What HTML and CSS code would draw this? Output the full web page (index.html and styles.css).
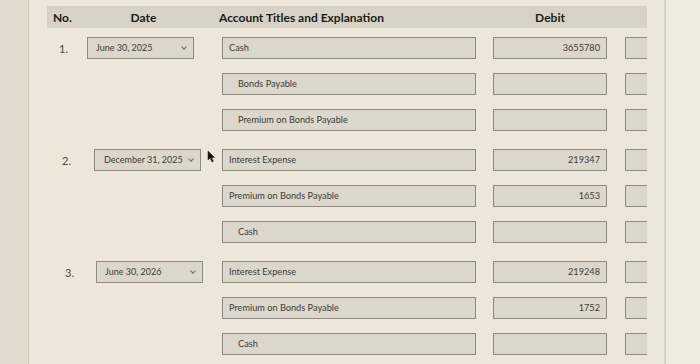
FILE: index.html
```html
<!DOCTYPE html>
<html>
<head>
<meta charset="utf-8">
<link rel="stylesheet" href="styles.css">
</head>
<body>
<div class="screen">
  <div class="left-strip"></div>
  <div class="panel">
    <div class="sheet">
      <div class="head row">
        <div class="c-no">No.</div>
        <div class="c-date center">Date</div>
        <div class="c-acct acct-head">Account Titles and Explanation</div>
        <div class="c-debit center">Debit</div>
        <div class="c-credit"></div>
      </div>

      <div class="row entry first">
        <div class="c-no num">1.</div>
        <div class="c-date"><div class="select">June 30, 2025<span class="chev"></span></div></div>
        <div class="c-acct"><div class="box">Cash</div></div>
        <div class="c-debit"><div class="box amt">3655780</div></div>
        <div class="c-credit"><div class="box"></div></div>
      </div>
      <div class="row">
        <div class="c-no"></div>
        <div class="c-date"></div>
        <div class="c-acct"><div class="box indent">Bonds Payable</div></div>
        <div class="c-debit"><div class="box"></div></div>
        <div class="c-credit"><div class="box"></div></div>
      </div>
      <div class="row">
        <div class="c-no"></div>
        <div class="c-date"></div>
        <div class="c-acct"><div class="box indent">Premium on Bonds Payable</div></div>
        <div class="c-debit"><div class="box"></div></div>
        <div class="c-credit"><div class="box"></div></div>
      </div>

      <div class="row entry">
        <div class="c-no num n2">2.</div>
        <div class="c-date"><div class="select shift">December 31, 2025<span class="chev"></span></div></div>
        <div class="c-acct"><div class="box">Interest Expense</div></div>
        <div class="c-debit"><div class="box amt">219347</div></div>
        <div class="c-credit"><div class="box"></div></div>
      </div>
      <div class="row">
        <div class="c-no"></div>
        <div class="c-date"></div>
        <div class="c-acct"><div class="box">Premium on Bonds Payable</div></div>
        <div class="c-debit"><div class="box amt">1653</div></div>
        <div class="c-credit"><div class="box"></div></div>
      </div>
      <div class="row">
        <div class="c-no"></div>
        <div class="c-date"></div>
        <div class="c-acct"><div class="box indent">Cash</div></div>
        <div class="c-debit"><div class="box"></div></div>
        <div class="c-credit"><div class="box"></div></div>
      </div>

      <div class="row entry">
        <div class="c-no num n3">3.</div>
        <div class="c-date"><div class="select shift2">June 30, 2026<span class="chev"></span></div></div>
        <div class="c-acct"><div class="box">Interest Expense</div></div>
        <div class="c-debit"><div class="box amt">219248</div></div>
        <div class="c-credit"><div class="box"></div></div>
      </div>
      <div class="row">
        <div class="c-no"></div>
        <div class="c-date"></div>
        <div class="c-acct"><div class="box">Premium on Bonds Payable</div></div>
        <div class="c-debit"><div class="box amt">1752</div></div>
        <div class="c-credit"><div class="box"></div></div>
      </div>
      <div class="row">
        <div class="c-no"></div>
        <div class="c-date"></div>
        <div class="c-acct"><div class="box indent">Cash</div></div>
        <div class="c-debit"><div class="box"></div></div>
        <div class="c-credit"><div class="box"></div></div>
      </div>
    </div>
  </div>
  <div class="right-strip"></div>
</div>
<svg class="cursor" width="9" height="13" viewBox="0 0 9 13"><path d="M1 1 L1 10 L3.2 8 L5 12 L6.4 11.3 L4.7 7.5 L7.6 7.5 Z" fill="#111" stroke="#333" stroke-width="0.6"/></svg>
</body>
</html>
```
FILE: styles.css
```css
html, body {
  margin: 0;
  padding: 0;
}
body {
  width: 700px;
  height: 364px;
  overflow: hidden;
  position: relative;
  background: #ebe6d8;
  font-family: Lato, "Open Sans", "Liberation Sans", sans-serif;
  color: #3b3a36;
}
.screen {
  display: flex;
  height: 364px;
}
.left-strip {
  width: 28px;
  flex: none;
  background: #e1dbcd;
  border-right: 1px solid #cdc7b8;
}
.panel {
  width: 635px;
  flex: none;
  background: #ece7d9;
  border-right: 2px solid #d7d2c4;
}
.right-strip {
  flex: 1;
  background: #eeeadf;
}
.sheet {
  margin: 6px 0 0 18px;
  width: 600px;
  overflow: hidden;
}
.row {
  display: flex;
  align-items: center;
  height: 22px;
  margin-top: 14px;
}
.row.entry {
  margin-top: 18px;
}
.row.first {
  margin-top: 9px;
}
.head {
  margin-top: 0;
  background: #d6d2c5;
  font-weight: 700;
  font-size: 12px;
  color: #1c1c1a;
}
.c-no {
  width: 40px;
  flex: none;
  padding-left: 6px;
  box-sizing: border-box;
}
.c-no.num {
  padding-left: 12px;
  font-size: 11px;
  color: #4a4944;
}
.c-no.n2 {
  padding-left: 15px;
}
.c-no.n3 {
  padding-left: 18px;
}
.c-date {
  width: 113px;
  flex: none;
}
.c-acct {
  width: 254px;
  flex: none;
  margin-left: 22px;
}
.acct-head {
  margin-left: 19px;
  width: 257px;
}
.c-debit {
  width: 114px;
  flex: none;
  margin-left: 17px;
}
.c-credit {
  width: 114px;
  flex: none;
  margin-left: 18px;
}
.center {
  text-align: center;
}
.box, .select {
  height: 22px;
  box-sizing: border-box;
  border: 1px solid #8e8a80;
  background: #dbd7cb;
  font-size: 9.2px;
  line-height: 20px;
  padding: 0 6px;
  color: #3d3c38;
  white-space: nowrap;
}
.box.indent {
  padding-left: 15px;
}
.box.amt {
  text-align: right;
  padding-right: 6px;
}
.select {
  width: 107px;
  padding: 0 6px 0 8px;
  font-size: 9px;
  display: flex;
  justify-content: space-between;
  align-items: center;
}
.select.shift {
  margin-left: 7px;
  padding-left: 9px;
}
.select.shift2 {
  margin-left: 9px;
}
.chev {
  width: 3px;
  height: 3px;
  border-right: 1px solid #6d6b65;
  border-bottom: 1px solid #6d6b65;
  transform: rotate(45deg);
  margin: -3px 1px 0 0;
}
.cursor {
  position: absolute;
  left: 207px;
  top: 150px;
}
```
